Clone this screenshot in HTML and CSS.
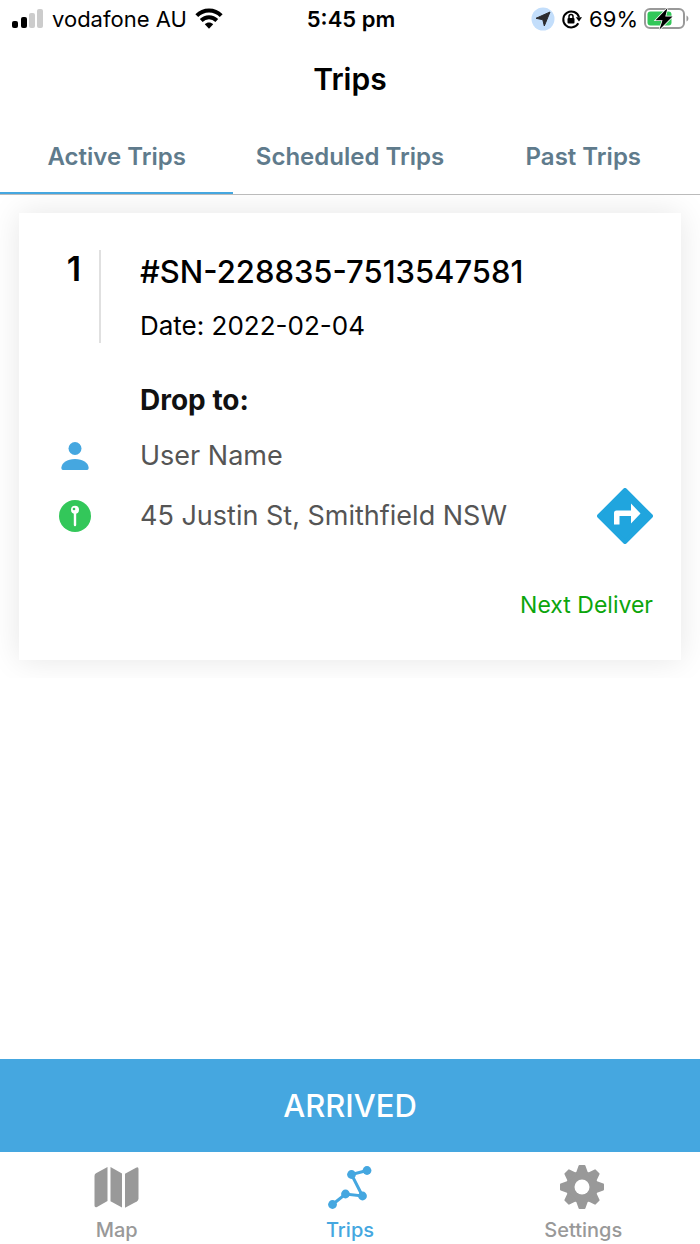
FILE: index.html
```html
<!DOCTYPE html>
<html lang="en">
<head>
<meta charset="utf-8">
<meta name="viewport" content="width=device-width, initial-scale=1">
<title>Trips</title>
<link rel="stylesheet" href="styles.css">
</head>
<body>
<div class="app">
  <div class="status">
    <div class="status-side">
      <svg class="signal" viewBox="0 0 32 20" width="32" height="20" aria-hidden="true">
        <rect x="0" y="12" width="6" height="7" rx="2" fill="#000"/>
        <rect x="9" y="8" width="6" height="11" rx="2" fill="#000"/>
        <rect x="17" y="4" width="6" height="15" rx="2" fill="#ccc"/>
        <rect x="25" y="0" width="6" height="19" rx="2" fill="#ccc"/>
      </svg>
      <span class="carrier">vodafone AU</span>
      <svg viewBox="0 0 28 22" width="28" height="22" fill="none" stroke="#000" aria-hidden="true">
        <path d="M1.800 7.700C8.500 .8 19.500 .8 26.200 7.700" stroke-width="4"/>
        <path d="M6.200 12.500C10.600 8.200 17.400 8.200 21.800 12.500" stroke-width="4"/>
        <path d="M9.800 16.300C12.200 13.900 15.800 13.900 18.200 16.300L14 20.800Z" fill="#000" stroke="none"/>
      </svg>
    </div>
    <span class="clock">5:45 pm</span>
    <div class="status-side status-right">
      <svg viewBox="0 0 24 24" width="24" height="24" aria-hidden="true">
        <circle cx="12" cy="12" r="11.500" fill="#c3defb"/>
        <path d="M19 5 13.300 19 11.800 12.700 5 11.300Z" fill="#2b2b2e" stroke="#2b2b2e" stroke-linejoin="round"/>
      </svg>
      <svg viewBox="-1 -1 22 22" width="22" height="22" aria-hidden="true">
        <path d="M16.300 14.300A8 8 0 1 1 17 8.300" fill="none" stroke="#000" stroke-width="2"/>
        <path d="M13.800 8.200H20L17 12.400Z"/>
        <rect x="5.500" y="9" width="7" height="5.500" rx="1"/>
        <path d="M7 9.500V7.500a2 2 0 0 1 4 0v2" fill="none" stroke="#000" stroke-width="1.500"/>
      </svg>
      <span class="percent">69%</span>
      <svg viewBox="0 0 46 22" width="46" height="22" aria-hidden="true">
        <rect x="1" y="1" width="39" height="19" rx="5" fill="none" stroke="#999" stroke-width="2"/>
        <rect x="3.500" y="3.500" width="24" height="14" rx="3" fill="#32c759"/>
        <path d="M42.500 7.500c2.500 1 2.500 5 0 6Z" fill="#999"/>
        <path d="M23.500 0 11.500 12.200h7L15.500 21.500 28.500 8.600h-7.200Z" fill="#000" stroke="#fff" stroke-width="1.500" paint-order="stroke"/>
      </svg>
    </div>
  </div>

  <header class="header"><h1 class="title">Trips</h1></header>

  <nav class="tabs">
    <button class="tab tab-active" type="button">Active Trips</button>
    <button class="tab" type="button">Scheduled Trips</button>
    <button class="tab" type="button">Past Trips</button>
  </nav>

  <main class="main">
    <section class="list">
      <article class="card">
        <div class="row row-head">
          <span class="number">1</span>
          <div class="summary">
            <h2 class="trip-id">#SN-228835-7513547581</h2>
            <p class="date">Date: 2022-02-04</p>
          </div>
        </div>
        <h3 class="drop">Drop to:</h3>
        <div class="row row-user">
          <span class="row-icon">
            <svg viewBox="0 0 28 28" width="28" height="28" fill="#45a7e0" aria-hidden="true">
              <circle cx="14" cy="6.500" r="6.500"/>
              <path d="M2 28C.7 28 .3 27 .4 25.600 1 20.500 6 17 14 17s13 3.500 13.600 8.600C27.700 27 27.300 28 26 28Z"/>
            </svg>
          </span>
          <span class="info">User Name</span>
        </div>
        <div class="row row-address">
          <span class="row-icon">
            <svg viewBox="0 0 32 32" width="32" height="32" aria-hidden="true">
              <circle cx="16" cy="16" r="16" fill="#33c75a"/>
              <circle cx="16" cy="9.800" r="4" fill="#fff"/>
              <circle cx="15" cy="9" r="1.300" fill="#33c75a"/>
              <path d="M16 12v13" stroke="#fff" stroke-width="2.400" stroke-linecap="round"/>
            </svg>
          </span>
          <span class="info">45 Justin St, Smithfield NSW</span>
          <button class="directions" type="button" aria-label="Directions">
            <svg viewBox="0 0 56 56" width="56" height="56" aria-hidden="true">
              <path d="M28 2 54 28 28 54 2 28Z" fill="#20a5de" stroke="#20a5de" stroke-width="4" stroke-linejoin="round"/>
              <path d="M17 36.500V25q0-2.500 2.500-2.500H34V15.500L43.500 25.500 34 35.500V28H22.500v8.500Z" fill="#fff"/>
            </svg>
          </button>
        </div>
        <p class="next">Next Deliver</p>
      </article>
    </section>
  </main>

  <button class="arrived" type="button">ARRIVED</button>

  <nav class="bottom">
    <a class="item" href="#map">
      <svg viewBox="0 0 46 44" width="46" height="44" fill="#999" aria-hidden="true">
        <path d="M13.500 2V36L3 42Q.5 42.800 .5 40.500V11Q.5 9 2 8.200Z"/>
        <path d="M16.500 2 28 8.500V42.500L16.500 36.200Z"/>
        <path d="M31 8.700 42 2.700Q44.500 1.500 44.500 4V33.500Q44.500 35.500 42.800 36.500L31 42.700Z"/>
      </svg>
      <span>Map</span>
    </a>
    <a class="item item-active" href="#trips">
      <svg viewBox="0 0 46 44" width="46" height="44" fill="#45a7e0" stroke="#45a7e0" aria-hidden="true">
        <path d="M5.500 39.500 18.500 29 35.500 31 24.500 9.500 40 5.500" fill="none" stroke-width="3"/>
        <g stroke="none">
          <circle cx="5.500" cy="39.500" r="4.400"/>
          <circle cx="18.500" cy="29" r="4.400"/>
          <circle cx="35.500" cy="31" r="4.400"/>
          <circle cx="24.500" cy="9.500" r="4.400"/>
          <circle cx="40" cy="5.500" r="4.400"/>
        </g>
      </svg>
      <span>Trips</span>
    </a>
    <a class="item" href="#settings">
      <svg viewBox="0 0 46 44" width="46" height="44" aria-hidden="true">
        <g fill="#999" stroke="#999" stroke-width="2" stroke-linejoin="round">
          <circle cx="22" cy="22" r="15"/>
          <path id="tooth" d="M17 8 19.500 1H24.500L27 8Z"/>
          <use href="#tooth" transform="rotate(45 22 22)"/>
          <use href="#tooth" transform="rotate(90 22 22)"/>
          <use href="#tooth" transform="rotate(135 22 22)"/>
          <use href="#tooth" transform="rotate(180 22 22)"/>
          <use href="#tooth" transform="rotate(225 22 22)"/>
          <use href="#tooth" transform="rotate(270 22 22)"/>
          <use href="#tooth" transform="rotate(315 22 22)"/>
        </g>
        <circle cx="22" cy="22" r="7.500" fill="#fff"/>
      </svg>
      <span>Settings</span>
    </a>
  </nav>
</div>
</body>
</html>
```
FILE: styles.css
```css
* { box-sizing: border-box; }
body {
  margin: 0;
  background: #fff;
  color: #000;
  font-family: Inter, "Liberation Sans", sans-serif;
}
h1, h2, h3, p { margin: 0; }
svg { display: block; flex: none; }
button {
  margin: 0;
  padding: 0;
  border: 0;
  background: none;
  font-family: inherit;
  cursor: pointer;
}
.app {
  display: flex;
  flex-direction: column;
  min-height: 100vh;
}
.status {
  display: grid;
  grid-template-columns: 1fr auto 1fr;
  align-items: center;
  height: 38px;
  padding: 0 10px 0 12px;
  font-size: 22px;
  line-height: 28px;
}
.status-side {
  display: flex;
  align-items: center;
  gap: 8px;
}
.status-right {
  justify-content: flex-end;
  gap: 6px;
}
.clock { font-weight: 600; }
.header {
  display: flex;
  align-items: center;
  justify-content: center;
  height: 82px;
}
.title {
  font-size: 30px;
  line-height: 36px;
  font-weight: 600;
}
.tabs {
  display: grid;
  grid-template-columns: repeat(3, 1fr);
  height: 75px;
  border-bottom: 1px solid #bbb;
}
.tab {
  border-bottom: 2px solid transparent;
  color: #5f7b8c;
  font-size: 24px;
  font-weight: 600;
}
.tab-active { border-bottom-color: #45a7e0; }
.main { flex: 1; }
.list {
  overflow: hidden;
  padding: 18px 19px;
}
.card {
  display: flex;
  flex-direction: column;
  padding: 37px 28px 40px 30px;
  background: #fff;
  box-shadow: 0 0 30px rgba(0, 0, 0, 0.1);
}
.row {
  display: flex;
  align-items: center;
  gap: 39px;
}
.row-head { align-items: stretch; }
.number {
  width: 52px;
  border-right: 2px solid #e0e0e0;
  text-align: center;
  font-size: 34px;
  line-height: 38px;
  font-weight: 600;
}
.summary {
  display: flex;
  flex-direction: column;
  gap: 16px;
  padding-bottom: 1px;
}
.trip-id {
  font-size: 31px;
  line-height: 44px;
  font-weight: 500;
}
.date {
  font-size: 26px;
  line-height: 32px;
}
.drop {
  margin: 39px 0 0 91px;
  font-size: 28px;
  line-height: 36px;
  font-weight: 700;
  color: #111;
}
.row-user { margin-top: 20px; }
.row-address { margin-top: 14px; }
.row-icon {
  display: flex;
  justify-content: center;
  width: 52px;
}
.info {
  flex: 1;
  font-size: 27px;
  line-height: 36px;
  color: #555;
}
.next {
  margin-top: 46px;
  text-align: right;
  font-size: 23px;
  line-height: 30px;
  color: #0ca50c;
}
.arrived {
  height: 93px;
  background: #45a7e0;
  color: #fff;
  font-size: 31px;
  font-weight: 500;
}
.bottom {
  display: grid;
  grid-template-columns: repeat(3, 1fr);
  height: 92px;
  padding-top: 13px;
}
.item {
  display: flex;
  flex-direction: column;
  align-items: center;
  gap: 9px;
  color: #999;
  font-size: 20px;
  line-height: 24px;
  font-weight: 500;
  text-decoration: none;
}
.item-active { color: #45a7e0; }
```
